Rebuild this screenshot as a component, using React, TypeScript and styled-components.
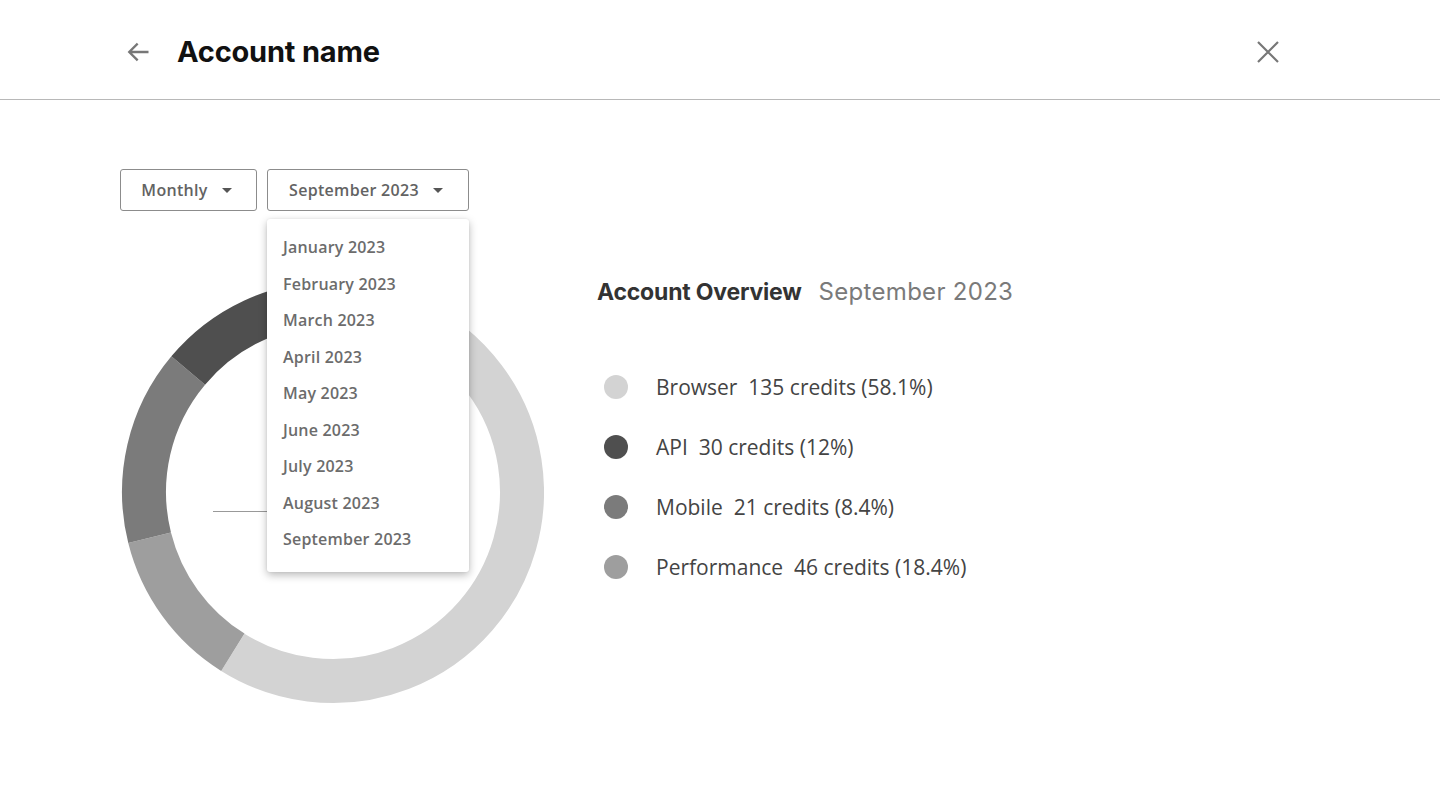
import React from "react";
import styled, { createGlobalStyle } from "styled-components";

const Global = createGlobalStyle`
  html, body { margin: 0; padding: 0; background: #fff; }
  body { font-family: "Open Sans", sans-serif; }
  * { box-sizing: border-box; }
`;

const Page = styled.div`
  width: 1440px;
  height: 810px;
  background: #fff;
  display: flex;
  flex-direction: column;
`;

const Header = styled.header`
  height: 100px;
  border-bottom: 1px solid #b8b8b8;
  display: flex;
  align-items: center;
  padding: 4px 154px 0 120px;
  gap: 21px;
`;

const IconButton = styled.button`
  border: 0;
  background: none;
  padding: 0;
  width: 36px;
  height: 36px;
  display: flex;
  align-items: center;
  justify-content: center;
  cursor: pointer;
`;

const Title = styled.h1`
  margin: 0;
  flex: 1;
  font-family: Inter, sans-serif;
  font-weight: 700;
  font-size: 29px;
  letter-spacing: -0.2px;
  color: #111;
  line-height: 1;
`;

const Body = styled.main`
  padding: 69px 0 0 120px;
  display: flex;
  flex-direction: column;
`;

const Controls = styled.div`
  display: flex;
  gap: 10px;
  position: relative;
  z-index: 2;
`;

const SelectWrap = styled.div`
  position: relative;
`;

const SelectButton = styled.button<{ $w: number }>`
  width: ${(p) => p.$w}px;
  height: 42px;
  border: 1px solid #8c8c8c;
  border-radius: 3px;
  background: #fff;
  display: flex;
  align-items: center;
  justify-content: center;
  gap: 14px;
  font-family: "Open Sans", sans-serif;
  font-weight: 600;
  font-size: 16px;
  color: #636363;
  letter-spacing: 0.3px;
  padding: 0 4px 0 0;
`;

const Caret = styled.span`
  width: 0;
  height: 0;
  border-left: 5px solid transparent;
  border-right: 5px solid transparent;
  border-top: 5px solid #555;
  margin-top: 1px;
`;

const Menu = styled.ul`
  position: absolute;
  top: 50px;
  left: 0;
  width: 202px;
  margin: 0;
  padding: 10px 0 14px;
  list-style: none;
  background: #fff;
  border-radius: 3px;
  box-shadow: 0 3px 8px rgba(0, 0, 0, 0.28), 0 0 2px rgba(0, 0, 0, 0.08);
`;

const MenuItem = styled.li`
  height: 36.5px;
  display: flex;
  align-items: center;
  padding-left: 16px;
  font-family: "Open Sans", sans-serif;
  font-weight: 600;
  font-size: 16px;
  letter-spacing: 0.2px;
  color: #6c6c6c;
`;

const Content = styled.div`
  display: flex;
  align-items: flex-start;
  margin-top: 69px;
  gap: 53px;
`;

const Chart = styled.svg`
  display: block;
  flex: none;
`;

const Overview = styled.section`
  display: flex;
  flex-direction: column;
`;

const OverviewTitle = styled.h2`
  margin: 0;
  display: flex;
  align-items: baseline;
  gap: 17px;
  font-family: Inter, sans-serif;
  font-size: 23px;
  line-height: 1;
  font-weight: 700;
  color: #333;
  letter-spacing: -0.2px;
`;

const Sub = styled.span`
  font-weight: 400;
  color: #7a7a7a;
  font-size: 24px;
  letter-spacing: 0.3px;
`;

const Legend = styled.ul`
  list-style: none;
  margin: 69px 0 0;
  padding: 0 0 0 7px;
  display: flex;
  flex-direction: column;
  gap: 32px;
`;

const LegendRow = styled.li`
  display: flex;
  align-items: center;
  gap: 28px;
  height: 28px;
  font-family: "Open Sans", sans-serif;
  font-size: 21px;
  color: #444;
`;

const Dot = styled.span<{ $c: string }>`
  width: 24px;
  height: 24px;
  border-radius: 50%;
  background: ${(p) => p.$c};
  flex: none;
`;

const months = [
  "January 2023",
  "February 2023",
  "March 2023",
  "April 2023",
  "May 2023",
  "June 2023",
  "July 2023",
  "August 2023",
  "September 2023",
];

const segments = [
  { from: 0, to: 212, color: "#d3d3d3" },
  { from: 212, to: 256, color: "#9e9e9e" },
  { from: 256, to: 310, color: "#7b7b7b" },
  { from: 310, to: 360, color: "#4f4f4f" },
];

const legend = [
  { c: "#d3d3d3", label: "Browser", v: "135 credits (58.1%)" },
  { c: "#4f4f4f", label: "API", v: "30 credits (12%)" },
  { c: "#7b7b7b", label: "Mobile", v: "21 credits (8.4%)" },
  { c: "#9e9e9e", label: "Performance", v: "46 credits (18.4%)" },
];

function arc(cx: number, cy: number, r: number, a0: number, a1: number) {
  const p = (a: number) => {
    const rad = ((a - 90) * Math.PI) / 180;
    return [cx + r * Math.cos(rad), cy + r * Math.sin(rad)];
  };
  const [x0, y0] = p(a0);
  const [x1, y1] = p(a1 - 0.001);
  const large = a1 - a0 > 180 ? 1 : 0;
  return `M ${x0} ${y0} A ${r} ${r} 0 ${large} 1 ${x1} ${y1}`;
}

export default function App() {
  return (
    <Page>
      <Global />
      <Header>
        <IconButton aria-label="back">
          <svg width="28" height="28" viewBox="0 0 24 24" fill="none" stroke="#777" strokeWidth="2" strokeLinecap="square">
            <path d="M20 12H5M11 5.5L4.5 12L11 18.5" />
          </svg>
        </IconButton>
        <Title>Account name</Title>
        <IconButton aria-label="close">
          <svg width="24" height="24" viewBox="0 0 24 24" fill="none" stroke="#777" strokeWidth="2.2">
            <path d="M2 2L22 22M22 2L2 22" />
          </svg>
        </IconButton>
      </Header>
      <Body>
        <Controls>
          <SelectButton $w={137}>
            Monthly <Caret />
          </SelectButton>
          <SelectWrap>
            <SelectButton $w={202}>
              September 2023 <Caret />
            </SelectButton>
            <Menu>
              {months.map((m) => (
                <MenuItem key={m}>{m}</MenuItem>
              ))}
            </Menu>
          </SelectWrap>
        </Controls>
        <Content>
          <Chart width="424" height="424" viewBox="0 0 424 424">
            {segments.map((s) => (
              <path key={s.color} d={arc(213, 212, 189, s.from, s.to)} stroke={s.color} strokeWidth="44" fill="none" />
            ))}
            <line x1="93" y1="231.5" x2="230" y2="231.5" stroke="#999" strokeWidth="1" />
          </Chart>
          <Overview>
            <OverviewTitle>
              Account Overview <Sub>September 2023</Sub>
            </OverviewTitle>
            <Legend>
              {legend.map((l) => (
                <LegendRow key={l.label}>
                  <Dot $c={l.c} />
                  <span>
                    {l.label}&nbsp;&nbsp;{l.v}
                  </span>
                </LegendRow>
              ))}
            </Legend>
          </Overview>
        </Content>
      </Body>
    </Page>
  );
}
